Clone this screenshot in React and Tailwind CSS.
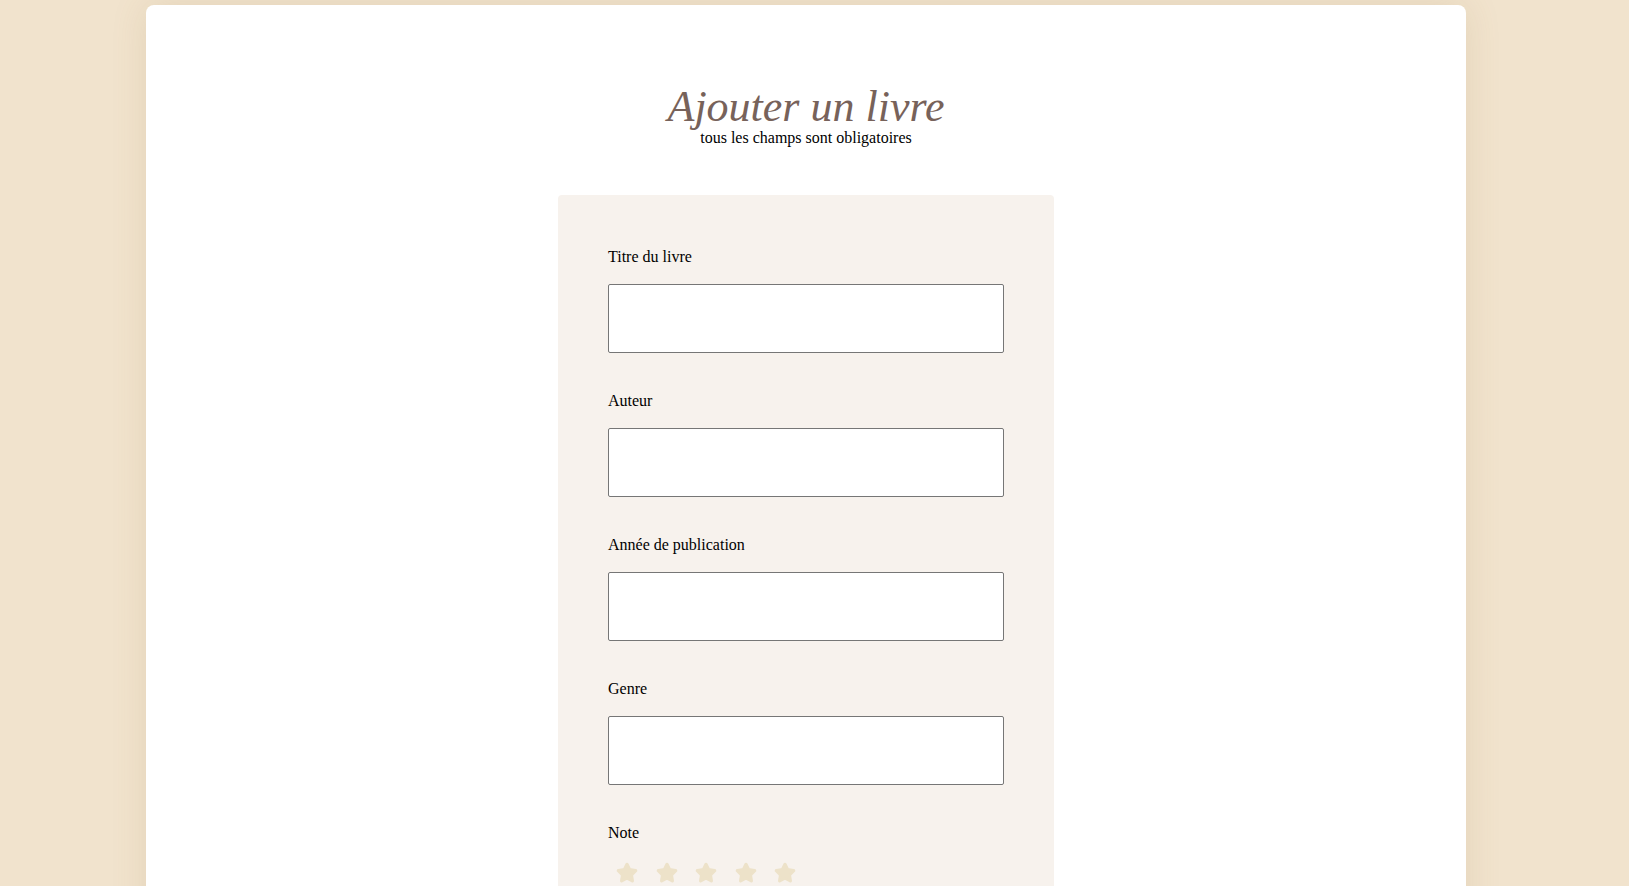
import { Star } from 'lucide-react'

const FIELDS = ['Titre du livre', 'Auteur', 'Année de publication', 'Genre']

export default function App() {
  return (
    <div
      className="min-h-screen overflow-hidden bg-[#f1e3cd] pt-[5px]"
      style={{ fontFamily: '"Liberation Serif", "Times New Roman", serif' }}
    >
      <main className="ml-[146px] w-[1320px] rounded-t-[8px] bg-white pt-[79px] pb-16 shadow-[0_0_36px_rgba(150,110,60,0.14)]">
        <header className="text-center">
          <h1 className="text-[44px] leading-[46px] italic text-[#77625a]">Ajouter un livre</h1>
          <p className="-mt-px text-[16px] leading-[18px] text-black">tous les champs sont obligatoires</p>
        </header>

        <form className="mx-auto mt-[48px] w-[496px] rounded-[4px] bg-[#f7f2ed] pt-[53px] pb-[60px] pl-[50px] pr-[50px]">
          {FIELDS.map((label) => (
            <div key={label} className="mb-[39px]">
              <label className="block text-[16px] leading-[18px] text-black">{label}</label>
              <input
                type="text"
                className="mt-[18px] block h-[69px] w-[396px] rounded-[2px] border border-[#767676] bg-white"
              />
            </div>
          ))}

          <div>
            <label className="block text-[16px] leading-[18px] text-black">Note</label>
            <div className="mt-[20px] ml-[8px] flex gap-[17.5px]">
              {[1, 2, 3, 4, 5].map((n) => (
                <Star
                  key={n}
                  size={22}
                  strokeWidth={2.5}
                  className="fill-[#ede2c9] text-[#ede2c9]"
                />
              ))}
            </div>
          </div>
        </form>
      </main>
    </div>
  )
}
